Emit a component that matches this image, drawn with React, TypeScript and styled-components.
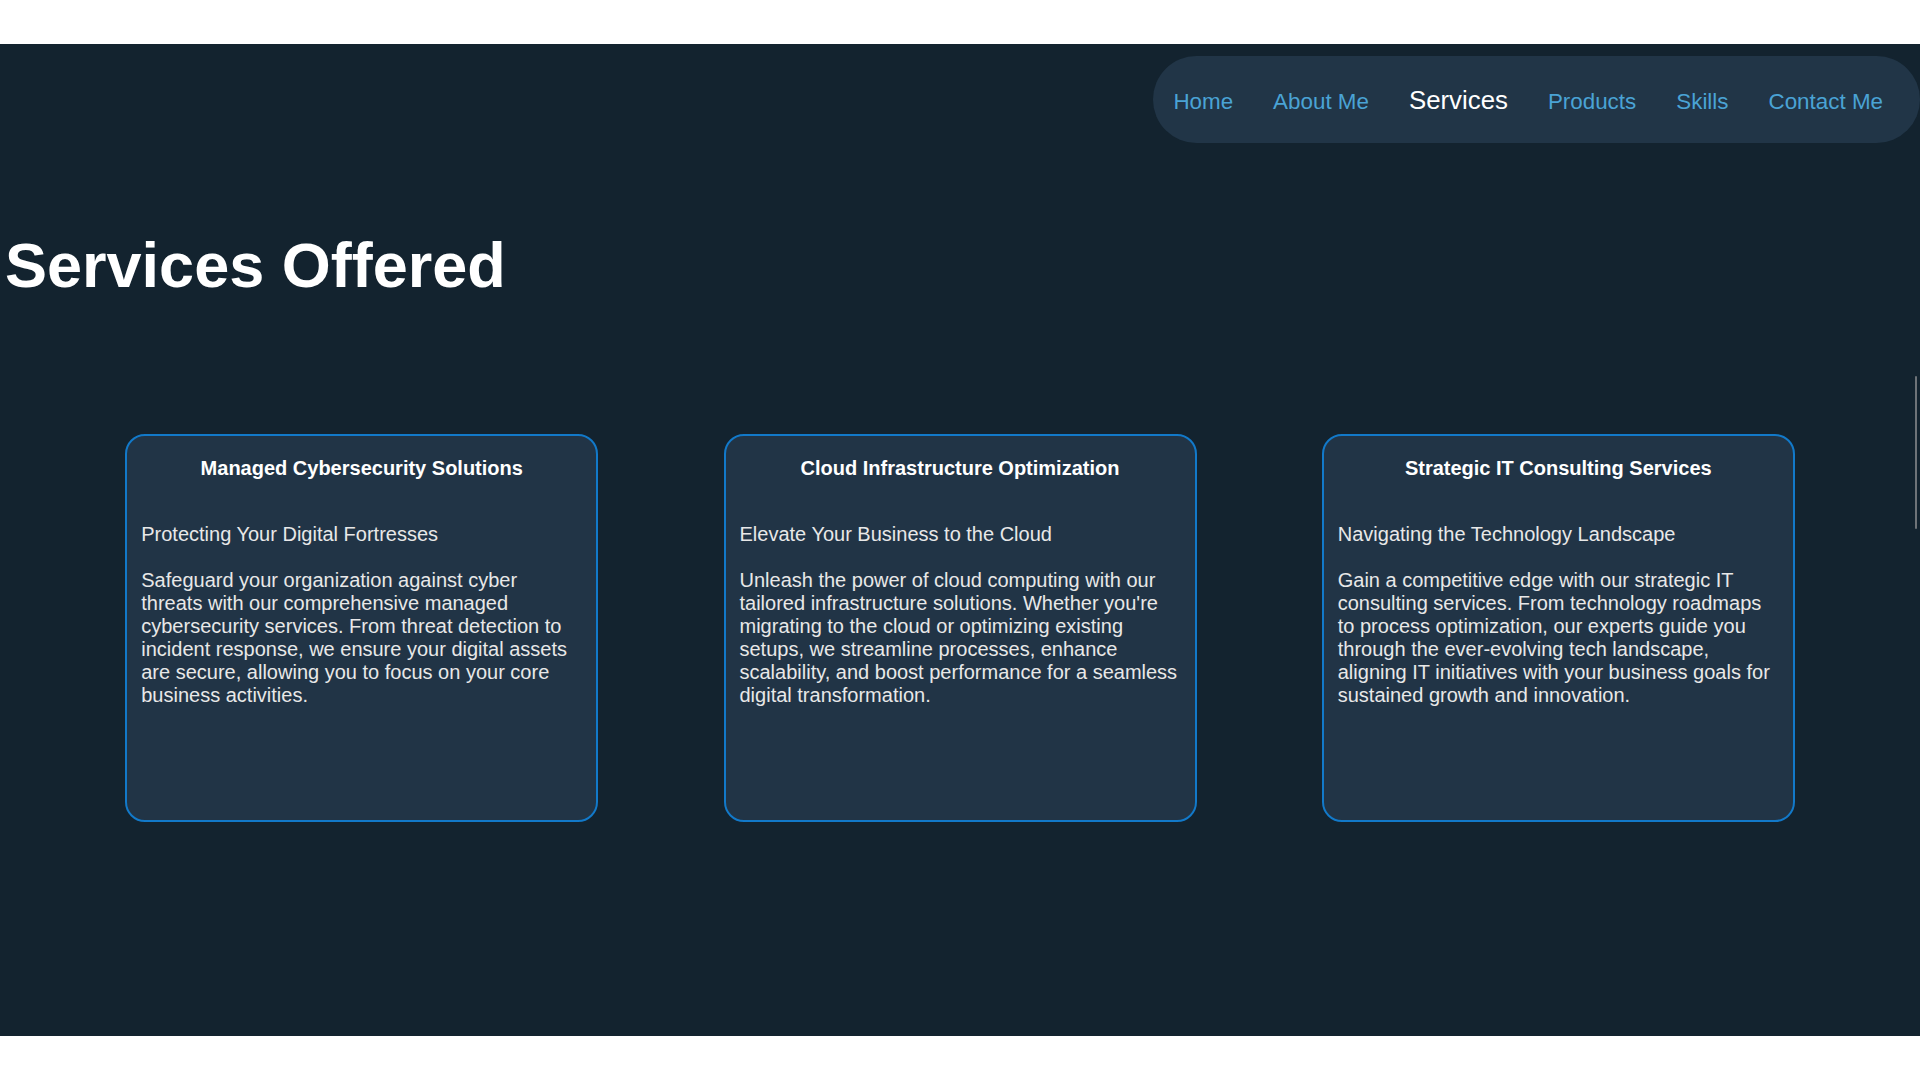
import React from "react";
import styled, { createGlobalStyle } from "styled-components";

const GlobalStyle = createGlobalStyle`
  html, body {
    margin: 0;
    padding: 0;
    background: #ffffff;
    font-family: "Liberation Sans", Arial, Helvetica, sans-serif;
  }
  * { box-sizing: border-box; }
`;

const Section = styled.section`
  position: relative;
  margin-top: 44px;
  height: 992px;
  background: #13232f;
  padding-top: 12px;
  display: flex;
  flex-direction: column;
  overflow: hidden;
`;

const NavRow = styled.div`
  display: flex;
  justify-content: flex-end;
`;

const NavPill = styled.nav`
  height: 87px;
  display: flex;
  align-items: center;
  gap: 40px;
  padding: 0 37px 0 20px;
  background: #213547;
  border-radius: 44px;
`;

const NavLink = styled.a<{ $active?: boolean }>`
  font-size: ${(p) => (p.$active ? "25.8px" : "22.4px")};
  color: ${(p) => (p.$active ? "#ffffff" : "#4aa3d5")};
  text-decoration: none;
  line-height: 1;
  padding-top: ${(p) => (p.$active ? "3px" : "5px")};
  cursor: pointer;
`;

const Heading = styled.h1`
  margin: 87px 0 0 5px;
  font-size: 63px;
  font-weight: 700;
  color: #ffffff;
  line-height: 71px;
`;

const CardRow = styled.div`
  margin-top: 133px;
  display: flex;
  justify-content: space-evenly;
`;

const Card = styled.div`
  width: 473px;
  height: 388px;
  background: #213446;
  border: 2px solid #1279c9;
  border-radius: 20px;
  padding: 21px 14px;
  color: #e8e8e8;
  font-size: 20px;
  line-height: 23px;
`;

const CardTitle = styled.h3`
  margin: 0;
  font-size: 20px;
  line-height: 23px;
  font-weight: 700;
  text-align: center;
  color: #ffffff;
`;

const CardSubtitle = styled.p`
  margin: 43px 0 0;
`;

const CardBody = styled.p`
  margin: 23px 0 0;
`;

const ScrollThumb = styled.div`
  position: absolute;
  right: 3px;
  top: 332px;
  width: 2px;
  height: 153px;
  background: #6e7378;
  border-radius: 1px;
`;

const links = ["Home", "About Me", "Services", "Products", "Skills", "Contact Me"];

const services = [
  {
    title: "Managed Cybersecurity Solutions",
    subtitle: "Protecting Your Digital Fortresses",
    body:
      "Safeguard your organization against cyber threats with our comprehensive managed cybersecurity services. From threat detection to incident response, we ensure your digital assets are secure, allowing you to focus on your core business activities.",
  },
  {
    title: "Cloud Infrastructure Optimization",
    subtitle: "Elevate Your Business to the Cloud",
    body:
      "Unleash the power of cloud computing with our tailored infrastructure solutions. Whether you're migrating to the cloud or optimizing existing setups, we streamline processes, enhance scalability, and boost performance for a seamless digital transformation.",
  },
  {
    title: "Strategic IT Consulting Services",
    subtitle: "Navigating the Technology Landscape",
    body:
      "Gain a competitive edge with our strategic IT consulting services. From technology roadmaps to process optimization, our experts guide you through the ever-evolving tech landscape, aligning IT initiatives with your business goals for sustained growth and innovation.",
  },
];

export default function App() {
  return (
    <>
      <GlobalStyle />
      <Section>
        <NavRow>
          <NavPill>
            {links.map((l) => (
              <NavLink key={l} $active={l === "Services"}>
                {l}
              </NavLink>
            ))}
          </NavPill>
        </NavRow>
        <Heading>Services Offered</Heading>
        <CardRow>
          {services.map((s) => (
            <Card key={s.title}>
              <CardTitle>{s.title}</CardTitle>
              <CardSubtitle>{s.subtitle}</CardSubtitle>
              <CardBody>{s.body}</CardBody>
            </Card>
          ))}
        </CardRow>
        <ScrollThumb />
      </Section>
    </>
  );
}
